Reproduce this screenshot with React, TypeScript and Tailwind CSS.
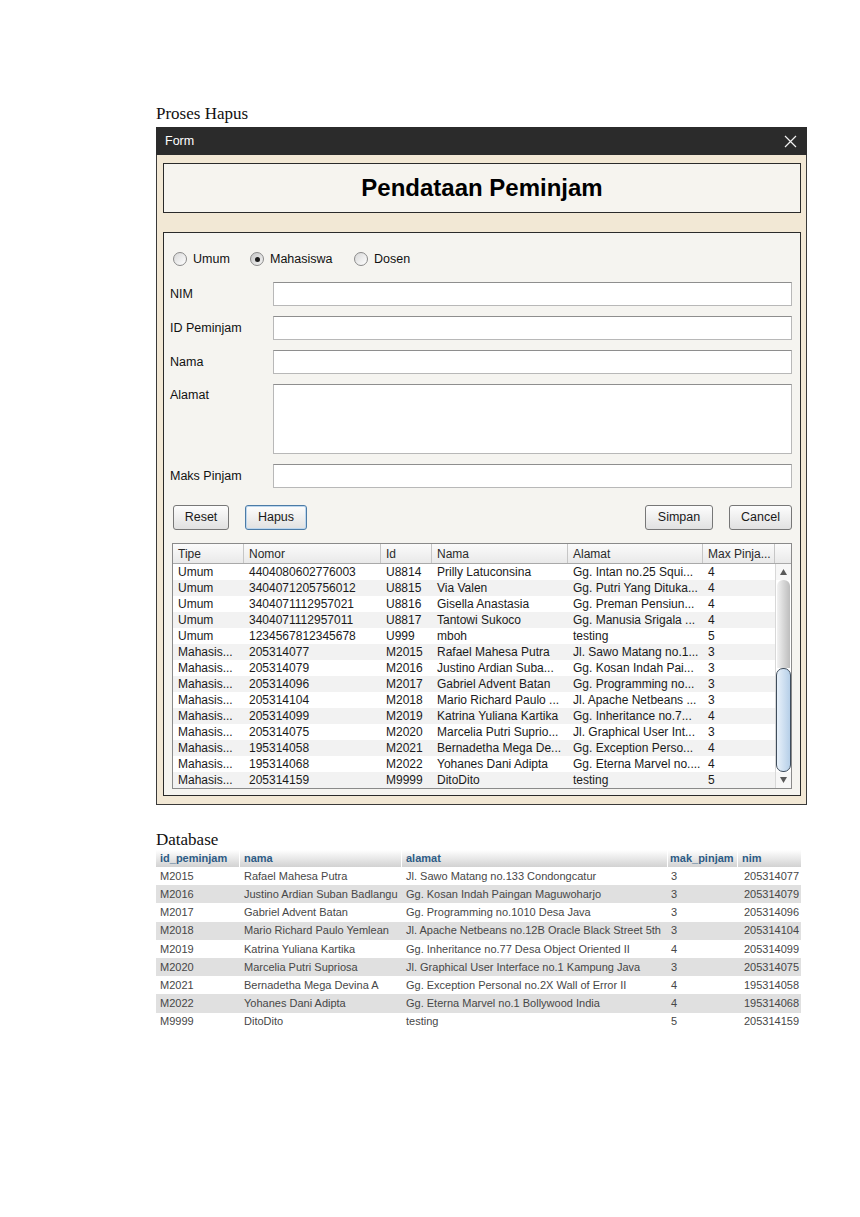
import React from "react";

const tableRows: string[][] = [
  ["Umum", "4404080602776003", "U8814", "Prilly Latuconsina", "Gg. Intan no.25 Squi...", "4"],
  ["Umum", "3404071205756012", "U8815", "Via Valen", "Gg. Putri Yang Dituka...", "4"],
  ["Umum", "3404071112957021", "U8816", "Gisella Anastasia", "Gg. Preman Pensiun...", "4"],
  ["Umum", "3404071112957011", "U8817", "Tantowi Sukoco", "Gg. Manusia Srigala ...", "4"],
  ["Umum", "1234567812345678", "U999", "mboh", "testing", "5"],
  ["Mahasis...", "205314077", "M2015", "Rafael Mahesa Putra", "Jl. Sawo Matang no.1...", "3"],
  ["Mahasis...", "205314079", "M2016", "Justino Ardian Suba...", "Gg. Kosan Indah Pai...", "3"],
  ["Mahasis...", "205314096", "M2017", "Gabriel Advent Batan", "Gg. Programming no...", "3"],
  ["Mahasis...", "205314104", "M2018", "Mario Richard Paulo ...", "Jl. Apache Netbeans ...", "3"],
  ["Mahasis...", "205314099", "M2019", "Katrina Yuliana Kartika", "Gg. Inheritance no.7...", "4"],
  ["Mahasis...", "205314075", "M2020", "Marcelia Putri Suprio...", "Jl. Graphical User Int...", "3"],
  ["Mahasis...", "195314058", "M2021", "Bernadetha Mega De...", "Gg. Exception Perso...", "4"],
  ["Mahasis...", "195314068", "M2022", "Yohanes Dani Adipta", "Gg. Eterna Marvel no....", "4"],
  ["Mahasis...", "205314159", "M9999", "DitoDito", "testing", "5"],
];

const dbRows: string[][] = [
  ["M2015", "Rafael Mahesa Putra", "Jl. Sawo Matang no.133 Condongcatur", "3", "205314077"],
  ["M2016", "Justino Ardian Suban Badlangu", "Gg. Kosan Indah Paingan Maguwoharjo", "3", "205314079"],
  ["M2017", "Gabriel Advent Batan", "Gg. Programming no.1010 Desa Java", "3", "205314096"],
  ["M2018", "Mario Richard Paulo Yemlean", "Jl. Apache Netbeans no.12B Oracle Black Street 5th", "3", "205314104"],
  ["M2019", "Katrina Yuliana Kartika", "Gg. Inheritance no.77 Desa Object Oriented II", "4", "205314099"],
  ["M2020", "Marcelia Putri Supriosa", "Jl. Graphical User Interface no.1 Kampung Java", "3", "205314075"],
  ["M2021", "Bernadetha Mega Devina A", "Gg. Exception Personal no.2X Wall of Error II", "4", "195314058"],
  ["M2022", "Yohanes Dani Adipta", "Gg. Eterna Marvel no.1 Bollywood India", "4", "195314068"],
  ["M9999", "DitoDito", "testing", "5", "205314159"],
];

const colWidths = ["w-[71px]", "w-[137px]", "w-[51px]", "w-[136px]", "w-[135px]", "w-[72px]"];
const headers = ["Tipe", "Nomor", "Id", "Nama", "Alamat", "Max Pinja..."];

function Radio({ label, checked }: { label: string; checked?: boolean }) {
  return (
    <div className="flex items-center gap-[6px]">
      <span
        className={`flex h-[14px] w-[14px] items-center justify-center rounded-full border border-[#8a8a8a] ${
          checked ? "bg-linear-to-br from-[#c6c6c6] to-[#f4f4f4]" : "bg-linear-to-br from-[#d8d8d8] to-[#ffffff]"
        }`}
      >
        {checked && <span className="h-[5px] w-[5px] rounded-full bg-[#1c1c1c]" />}
      </span>
      <span>{label}</span>
    </div>
  );
}

function Field({ label }: { label: string }) {
  return (
    <div className="mt-[10px] flex h-[24px] items-center">
      <span className="w-[103px]">{label}</span>
      <div className="h-full w-[519px] border border-[#b8b8b8] border-t-[#8e8e8e] bg-white" />
    </div>
  );
}

function SwingButton({ label, width, focused }: { label: string; width: string; focused?: boolean }) {
  return (
    <button
      className={`flex h-[25px] ${width} items-center justify-center rounded-[3px] border bg-linear-to-b from-[#fdfdfd] to-[#e1e1e1] text-[12.5px] text-[#1a1a1a] ${
        focused ? "border-[#4c7ba6] shadow-[inset_0_0_0_1px_#bcd6ee]" : "border-[#777777]"
      }`}
    >
      {label}
    </button>
  );
}

function Arrow({ up }: { up?: boolean }) {
  return (
    <div className="flex h-[16px] items-center justify-center bg-[#f7f7f7]">
      <svg width="7" height="6" viewBox="0 0 7 6">
        {up ? <polygon points="3.5,0 7,6 0,6" fill="#5a5a5a" /> : <polygon points="0,0 7,0 3.5,6" fill="#5a5a5a" />}
      </svg>
    </div>
  );
}

export default function App() {
  return (
    <div className="min-h-[1217px] w-[860px] bg-white pl-[156px] pt-[104px] font-['Liberation_Sans',Arial,sans-serif] text-[#111]">
      <div className="font-['Liberation_Serif','Times_New_Roman',serif] text-[17px] leading-5">Proses Hapus</div>

      {/* window */}
      <div className="mt-[3px] w-[651px]">
        <div className="flex h-[28px] items-center justify-between bg-[#2b2b2b] pl-[9px] pr-[10px] text-[12.5px] text-white">
          <span>Form</span>
          <svg width="13" height="13" viewBox="0 0 13 13">
            <path d="M1 1L12 12M12 1L1 12" stroke="#f2f2f2" strokeWidth="1.2" />
          </svg>
        </div>
        <div className="border-x border-b border-[#3a3a3a] bg-[#f2e8d5] pb-[8px] pl-[6px] pr-[5px] pt-[8px]">
          <div className="flex h-[50px] items-center justify-center border border-[#2a2a2a] bg-[#f6f4ef] text-2xl font-bold text-black">
            Pendataan Peminjam
          </div>

          <div className="mt-[19px] flex flex-col border border-[#2a2a2a] bg-[#f5f4f0] pb-[6px] pl-[6px] pr-[8px] pt-[18px] text-[12.5px]">
            <div className="flex h-[16px] items-center pl-[3px]">
              <div className="w-[77px]">
                <Radio label="Umum" />
              </div>
              <div className="w-[104px]">
                <Radio label="Mahasiswa" checked />
              </div>
              <Radio label="Dosen" />
            </div>

            <div className="flex flex-col pt-[5px]">
              <Field label="NIM" />
              <Field label="ID Peminjam" />
              <Field label="Nama" />
              <div className="mt-[10px] flex h-[70px] items-start">
                <span className="w-[103px] pt-[2px]">Alamat</span>
                <div className="h-full w-[519px] border border-[#b8b8b8] border-t-[#8e8e8e] bg-white" />
              </div>
              <Field label="Maks Pinjam" />
            </div>

            <div className="mt-[17px] flex items-center justify-between pl-[3px]">
              <div className="flex gap-[16px]">
                <SwingButton label="Reset" width="w-[56px]" />
                <SwingButton label="Hapus" width="w-[62px]" focused />
              </div>
              <div className="flex gap-[16px]">
                <SwingButton label="Simpan" width="w-[68px]" />
                <SwingButton label="Cancel" width="w-[63px]" />
              </div>
            </div>

            {/* table */}
            <div className="ml-[2px] mt-[13px] w-[620px] border border-[#8a8a8a] bg-white text-[12px] text-[#1a1a1a]">
              <div className="flex h-[20px] border-b border-[#a9a9a9] bg-linear-to-b from-[#fbfbfb] to-[#e9e9e9]">
                {headers.map((h, i) => (
                  <div key={h} className={`${colWidths[i]} flex items-center border-r border-[#c6c6c6] pl-[5px] text-[#2a2a2a]`}>
                    {h}
                  </div>
                ))}
                <div className="w-[16px]" />
              </div>
              <div className="flex">
                <div className="w-[602px]">
                  {tableRows.map((row, r) => (
                    <div key={r} className={`flex h-[16px] items-center ${r % 2 === 1 ? "bg-[#f2f2f2]" : "bg-white"}`}>
                      {row.map((cell, c) => (
                        <div key={c} className={`${colWidths[c]} overflow-hidden whitespace-nowrap pl-[5px] leading-[16px]`}>
                          {cell}
                        </div>
                      ))}
                    </div>
                  ))}
                </div>
                <div className="flex w-[16px] flex-col border-l border-[#d8d8d8]">
                  <Arrow up />
                  <div className="flex flex-1 flex-col">
                    <div className="mx-[1px] flex-1 rounded-t-[6px] bg-linear-to-r from-[#f2f2f2] to-[#bdbdbd]" />
                    <div className="h-[104px] rounded-[7px] border border-[#3f4d5c] bg-linear-to-r from-[#e8f1fa] to-[#b6cfe8]" />
                  </div>
                  <Arrow />
                </div>
              </div>
            </div>
          </div>
        </div>
      </div>

      <div className="mt-[25px] font-['Liberation_Serif','Times_New_Roman',serif] text-[17px] leading-5">Database</div>

      {/* database */}
      <div className="w-[645px] text-[11px]">
        <div className="flex h-[17px] bg-linear-to-b from-white to-[#d2d2d2] font-bold text-[#2d5b85]">
          <div className="flex w-[84px] items-center border-r border-white pl-[4px]">id_peminjam</div>
          <div className="flex w-[162px] items-center border-r border-white pl-[4px]">nama</div>
          <div className="flex w-[266px] items-center border-r border-white pl-[4px]">alamat</div>
          <div className="flex w-[70px] items-center border-r border-white pl-[2px]">mak_pinjam</div>
          <div className="flex flex-1 items-center pl-[4px]">nim</div>
        </div>
        {dbRows.map((row, r) => (
          <div key={r} className={`flex h-[18.2px] items-center text-[#474747] ${r % 2 === 1 ? "bg-[#e0e0e0]" : "bg-white"}`}>
            <div className="w-[84px] pl-[4px]">{row[0]}</div>
            <div className="w-[162px] overflow-hidden whitespace-nowrap pl-[4px]">{row[1]}</div>
            <div className="w-[266px] overflow-hidden whitespace-nowrap pl-[4px]">{row[2]}</div>
            <div className="w-[70px] pl-[3px]">{row[3]}</div>
            <div className="flex-1 pr-[2px] text-right">{row[4]}</div>
          </div>
        ))}
      </div>
    </div>
  );
}
